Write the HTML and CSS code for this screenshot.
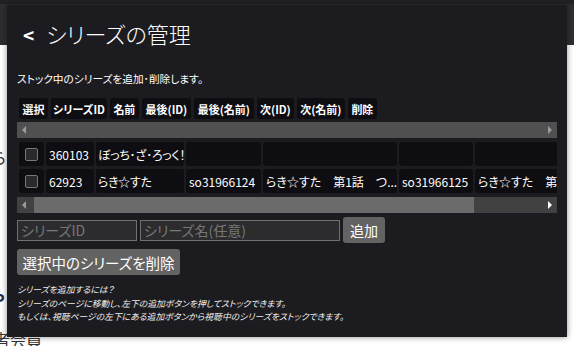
FILE: index.html
```html
<!DOCTYPE html>
<html lang="ja">
  <head>
    <meta charset="UTF-8" />
    <meta name="viewport" content="width=device-width, initial-scale=1.0" />
    <title>シリーズの管理</title>
    <link rel="stylesheet" href="styles.css">
  </head>
  <body>
    <div class="site">
      <div class="site-bar"></div>
      <div class="site-body">
        <span class="peek peek-ra">ら</span>
        <span class="peek peek-p">P</span>
        <span class="peek peek-member">者会員</span>
      </div>
    </div>

    <div class="dialog">
      <h1 class="title"><span class="back">&lt;</span>シリーズの管理</h1>
      <p class="lead">ストック中のシリーズを追加･削除します。</p>

      <table class="head">
        <tr>
          <th>選択</th>
          <th>シリーズID</th>
          <th>名前</th>
          <th>最後(ID)</th>
          <th>最後(名前)</th>
          <th>次(ID)</th>
          <th>次(名前)</th>
          <th>削除</th>
        </tr>
      </table>
      <div class="scrollbar">
        <span class="arrow left"></span>
        <span class="arrow right"></span>
      </div>

      <div class="list-wrap">
        <table class="list">
          <tr>
            <td><input type="checkbox" class="check" /></td>
            <td>360103</td>
            <td>ぼっち･ざ･ろっく！</td>
            <td></td>
            <td></td>
            <td></td>
            <td></td>
          </tr>
          <tr>
            <td><input type="checkbox" class="check" /></td>
            <td>62923</td>
            <td>らき☆すた</td>
            <td>so31966124</td>
            <td>らき☆すた　第1話　つ...</td>
            <td>so31966125</td>
            <td>らき☆すた　第2話　...</td>
          </tr>
        </table>
      </div>
      <div class="scrollbar scrollbar-x">
        <span class="arrow left"></span>
        <span class="thumb"></span>
        <span class="arrow right active"></span>
      </div>

      <div class="add-row">
        <input type="text" class="field field-id" placeholder="シリーズID" />
        <input type="text" class="field field-name" placeholder="シリーズ名(任意)" />
        <button class="btn">追加</button>
      </div>
      <button class="btn btn-delete">選択中のシリーズを削除</button>

      <p class="help">
        シリーズを追加するには？<br />
        シリーズのページに移動し、左下の追加ボタンを押してストックできます。<br />
        もしくは、視聴ページの左下にある追加ボタンから視聴中のシリーズをストックできます。
      </p>
    </div>
  </body>
</html>
```

FILE: styles.css
```css
body {
  margin: 0;
  font-family: "Noto Sans CJK JP", sans-serif;
  font-feature-settings: "palt";
  overflow: hidden;
}
.site {
  height: 346px;
  background: #fff;
}
.site-bar {
  height: 45px;
  background: #2e2e30;
  border-top: 4px solid #222225;
  box-sizing: border-box;
}
.site-body {
  position: relative;
  height: 301px;
}
.peek {
  position: absolute;
  color: #333;
}
.peek-ra {
  left: -8px;
  top: 100px;
  font-size: 16px;
}
.peek-p {
  left: -6px;
  top: 242px;
  font-size: 16px;
  font-weight: bold;
  color: #1a2a4a;
}
.peek-member {
  left: -6px;
  top: 283px;
  font-size: 16px;
  line-height: 22px;
}
.dialog {
  position: absolute;
  left: 7px;
  top: 5px;
  width: 560px;
  height: 332px;
  box-sizing: border-box;
  padding: 10px;
  background: #1c1b20;
  color: #fff;
  box-shadow: 0 0 6px rgba(0, 0, 0, 0.45);
}
.title {
  margin: 0;
  font-size: 22px;
  font-weight: 300;
  line-height: 36px;
  padding-left: 6px;
}
.back {
  font-weight: bold;
  font-size: 19px;
  margin-right: 12px;
}
.lead {
  margin: 18px 0 0;
  font-size: 10.7px;
  line-height: 16px;
}
.head {
  margin: 11px 0 0 -1px;
  border-spacing: 3px 0;
}
.head th {
  box-sizing: border-box;
  background: #0e0d12;
  border-radius: 3px;
  height: 21px;
  padding: 0 2px;
  font-size: 11px;
  font-weight: bold;
  text-align: center;
  white-space: nowrap;
}
.head th:nth-child(1) { width: 29px; }
.head th:nth-child(2) { width: 54px; }
.head th:nth-child(3) { width: 29px; }
.head th:nth-child(4) { width: 49px; }
.head th:nth-child(5) { width: 60px; }
.head th:nth-child(6) { width: 37px; }
.head th:nth-child(7) { width: 48px; }
.head th:nth-child(8) { width: 29px; }
.scrollbar {
  position: relative;
  height: 16px;
  margin-top: 3px;
  background: #505050;
}
.arrow {
  position: absolute;
  top: 4px;
  width: 0;
  height: 0;
  border-top: 4px solid transparent;
  border-bottom: 4px solid transparent;
}
.arrow.left {
  left: 5px;
  border-right: 4px solid #9a9a9a;
}
.arrow.right {
  right: 5px;
  border-left: 4px solid #9a9a9a;
}
.arrow.right.active {
  border-left-color: #fff;
}
.scrollbar-x {
  margin-top: 1px;
  background: #414141;
}
.thumb {
  position: absolute;
  left: 17px;
  width: 440px;
  top: 0;
  bottom: 0;
  background: #6b6b6b;
}
.list-wrap {
  width: 540px;
  overflow: hidden;
  margin-top: 1px;
}
.list {
  table-layout: fixed;
  width: 580px;
  border-spacing: 2px 3px;
}
.list td {
  box-sizing: border-box;
  background: #0e0d12;
  border-radius: 3px;
  height: 24px;
  padding: 0 3px;
  font-size: 12px;
  white-space: nowrap;
  overflow: hidden;
}
.list td:nth-child(1) {
  width: 25px;
  text-align: center;
}
.list td:nth-child(2) { width: 48px; }
.list td:nth-child(3) {
  width: 88px;
  padding: 0 2px;
  letter-spacing: -0.3px;
}
.list td:nth-child(4) { width: 75px; }
.list td:nth-child(5) { width: 134px; }
.list td:nth-child(6) { width: 74px; }
.list td:nth-child(7) { width: 120px; }
.check {
  appearance: none;
  width: 13px;
  height: 13px;
  margin: 4px 0 0;
  border: 1px solid #777;
  border-radius: 2px;
  background: #2a2a2e;
}
.add-row {
  display: flex;
  align-items: center;
  gap: 3px;
  margin-top: 4px;
}
.field {
  height: 21px;
  box-sizing: border-box;
  border: 1px solid #707070;
  background: #2c2c2f;
  color: #fff;
  font-family: inherit;
  font-feature-settings: "palt";
  font-size: 14px;
  padding: 0 3px;
}
.field::placeholder {
  color: #777;
}
.field-id {
  width: 120px;
}
.field-name {
  width: 200px;
}
.btn {
  background: #636363;
  color: #fff;
  border: none;
  border-radius: 3px;
  font-family: inherit;
  font-feature-settings: "palt";
  font-size: 14px;
  height: 26px;
  padding: 0 7px;
  cursor: pointer;
}
.btn-delete {
  display: block;
  margin-top: 6px;
  width: 163px;
  font-size: 14.5px;
  padding: 0;
}
.help {
  margin: 8px 0 0;
  font-size: 8.8px;
  line-height: 13.5px;
  font-style: italic;
  color: #eee;
}
```
